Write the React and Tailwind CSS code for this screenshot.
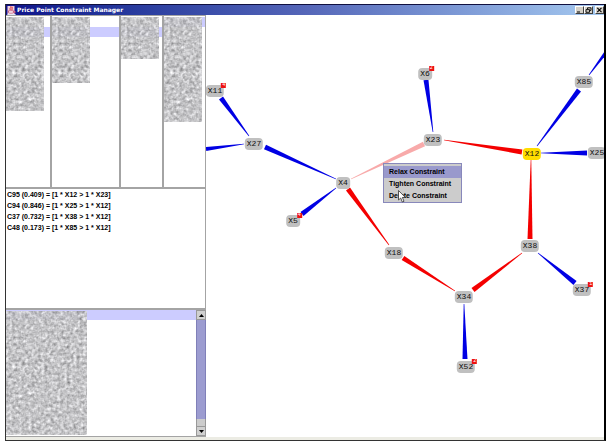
import { useState } from 'react';

const LISTS = [
  { id: 'products', selected: 1, noise: 'w-[38px] h-[94px]', col: 'border-r-2' },
  { id: 'attributes', selected: 1, noise: 'w-[38px] h-[66px]', col: 'border-r-2' },
  { id: 'regions', selected: 1, noise: 'w-[38px] h-[42px]', col: 'border-r-2' },
  { id: 'prices', selected: 0, noise: 'w-[38px] h-[105px]', col: 'border-r' },
];

const CONSTRAINTS = [
  'C95 (0.409) = [1 * X12 > 1 * X23]',
  'C94 (0.846) = [1 * X25 > 1 * X12]',
  'C37 (0.732) = [1 * X38 > 1 * X12]',
  'C48 (0.173) = [1 * X85 > 1 * X12]',
];

const MENU_ITEMS = ['Relax Constraint', 'Tighten Constraint', 'Delete Constraint'];

const NODES = [
  { id: 'X11', x: 9, y: 76, badge: 4 },
  { id: 'X6', x: 219, y: 59, badge: 2 },
  { id: 'X27', x: 48, y: 129 },
  { id: 'X23', x: 227, y: 125 },
  { id: 'X85', x: 378, y: 67 },
  { id: 'X12', x: 326, y: 139, active: true },
  { id: 'X25', x: 391, y: 138 },
  { id: 'X4', x: 137, y: 168 },
  { id: 'X5', x: 87, y: 206, badge: 4 },
  { id: 'X18', x: 188, y: 238 },
  { id: 'X38', x: 324, y: 231 },
  { id: 'X37', x: 376, y: 275, badge: 1 },
  { id: 'X34', x: 258, y: 282 },
  { id: 'X52', x: 260, y: 352, badge: 2 },
];

const BLUE = '#0000e4';
const RED = '#f40000';
const PINK = '#f8aaaa';

// [tip x, tip y, wide end x, wide end y, width, colour]
const EDGES = [
  [43, 121, 15, 83, 5, BLUE],
  [38, 129, 0, 134, 4, BLUE],
  [130, 164, 59, 132, 5, BLUE],
  [130, 173, 96, 199, 5, BLUE],
  [145, 164, 218, 129, 5, PINK],
  [183, 230, 142, 174, 5, RED],
  [249, 276, 197, 243, 5, RED],
  [316, 238, 267, 275, 5, RED],
  [325, 145, 324, 224, 5, RED],
  [238, 125, 316, 137, 5, RED],
  [335, 138, 381, 138, 5, BLUE],
  [331, 131, 373, 75, 5, BLUE],
  [383, 60, 404, 32, 4, BLUE],
  [332, 238, 369, 268, 5, BLUE],
  [258, 289, 259, 344, 5, BLUE],
  [227, 117, 220, 65, 5, BLUE],
];

function wedge([tx, ty, wx, wy, w]) {
  const len = Math.hypot(wx - tx, wy - ty);
  const nx = -(wy - ty) / len;
  const ny = (wx - tx) / len;
  const p = (x, y, r) => `${x + nx * r},${y + ny * r}`;
  return [p(tx, ty, 0.3), p(wx, wy, w / 2), p(wx, wy, -w / 2), p(tx, ty, -0.3)].join(' ');
}

function Noise({ className }) {
  return (
    <svg className={`absolute left-0 opacity-95 ${className}`} aria-hidden="true">
      <filter id="grain" x="0" y="0" width="100%" height="100%" colorInterpolationFilters="sRGB">
        <feTurbulence type="fractalNoise" baseFrequency="0.31" numOctaves="2" seed="11" />
        <feColorMatrix values="0.4 0.4 0 0 0.36  0.4 0.4 0 0 0.36  0.4 0.4 0 0 0.37  0 0 0 0 1" />
      </filter>
      <rect width="100%" height="100%" filter="url(#grain)" />
    </svg>
  );
}

function JavaIcon() {
  return (
    <svg viewBox="0 0 9 9" className="w-[9px] h-[9px]" aria-hidden="true">
      <rect x="0.5" width="7" height="8" fill="#f0d4de" />
      <path d="M3.6 0.2C5.2 1.6 1.6 2.3 3.6 4M5.6 0.8C4.3 2 5.8 2.8 4.6 4.2" stroke="#d81828" strokeWidth="1" fill="none" />
      <path d="M1.5 4.8H6.4V6.5C6 7.4 2 7.4 1.5 6.5ZM6.4 5.2H8.2V6.6H6.4" stroke="#b83060" strokeWidth="0.7" fill="#fff" />
      <path d="M0.3 8.4H8.6" stroke="#fff" strokeWidth="1" />
    </svg>
  );
}

function WindowButton({ label, children }) {
  return (
    <button
      type="button"
      aria-label={label}
      className="w-[9px] h-[8px] bg-[#d4d0c8] border border-t-white border-l-white border-r-[#404040] border-b-[#404040] flex"
    >
      <svg viewBox="0 0 7 6" className="w-full h-full" fill="none" stroke="#000">
        {children}
      </svg>
    </button>
  );
}

function TitleBar() {
  return (
    <header className="h-[11px] shrink-0 flex items-center gap-px pl-px border-t border-[#101040] bg-linear-to-r from-[#10108a] via-[#5566b8] to-[#a6caf0]">
      <JavaIcon />
      <h1 className="flex-1 text-white font-bold text-[6px] leading-[10px] font-['DejaVu_Sans',sans-serif]">
        Price Point Constraint Manager
      </h1>
      <div className="flex">
        <WindowButton label="Minimize">
          <path d="M1 5H4" />
        </WindowButton>
        <WindowButton label="Restore">
          <path d="M2.5 2V0.8H6V3.4H5M1 2.6H4.5V5.3H1Z" strokeWidth="0.9" />
        </WindowButton>
        <div className="w-[2px]" />
        <WindowButton label="Close">
          <path d="M1.3 0.8L5.5 5.2M5.5 0.8L1.3 5.2" strokeWidth="1.1" />
        </WindowButton>
      </div>
    </header>
  );
}

function ListPanel({ list }) {
  return (
    <div className={`relative border-[#a4a4a4] pt-px ${list.col}`}>
      <div className={list.selected === 0 ? 'h-[10px] bg-[#ccccff]' : 'h-[10px]'} />
      <div className={list.selected === 1 ? 'h-[10px] bg-[#ccccff]' : 'h-[10px]'} />
      <Noise className={`top-px ${list.noise}`} />
    </div>
  );
}

function ScrollBar() {
  const arrow = 'h-[10px] bg-[#d0d0d0] border border-[#999999] flex items-center justify-center';
  return (
    <div className="w-[10px] flex flex-col">
      <button type="button" aria-label="Scroll up" className={arrow}>
        <svg viewBox="0 0 5 3" className="w-[5px] h-[3px]"><path d="M0 3L2.5 0L5 3Z" /></svg>
      </button>
      <div className="flex-1 bg-[#9c9cd0] border-x border-[#8080b8]" />
      <div className="h-[7px] bg-[#cccccc] border-x border-[#999999]" />
      <button type="button" aria-label="Scroll down" className={arrow}>
        <svg viewBox="0 0 5 3" className="w-[5px] h-[3px]"><path d="M0 0L2.5 3L5 0Z" /></svg>
      </button>
    </div>
  );
}

function Sidebar() {
  return (
    <aside className="w-[200px] shrink-0 grid grid-rows-[174fr_119fr_129fr]">
      <div className="grid grid-cols-[46fr_69fr_43fr_42fr] border-t border-b-2 border-[#a4a4a4]">
        {LISTS.map((list) => <ListPanel key={list.id} list={list} />)}
      </div>
      <ul className="border-r border-[#a4a4a4] pl-px text-[7px] leading-[11px] font-bold text-black">
        {CONSTRAINTS.map((c) => <li key={c}>{c}</li>)}
      </ul>
      <div className="relative flex border-t-2 border-b border-[#a4a4a4]">
        <div className="flex-1">
          <div className="h-[10px] bg-[#ccccff]" />
        </div>
        <Noise className="top-px w-[81px] h-[124px]" />
        <ScrollBar />
      </div>
    </aside>
  );
}

function Node({ node }) {
  return (
    <div
      className={`absolute -translate-x-1/2 -translate-y-1/2 rounded-[4px] px-[2px] text-[8px] leading-[12px] font-['Liberation_Mono',monospace] text-[#111111] ${
        node.active ? 'bg-[#ffdd00]' : 'bg-[#c0c0c0]'
      }`}
      style={{ left: node.x, top: node.y }}
    >
      {node.id}
      {node.badge && (
        <span className="absolute -top-[2px] -right-[2px] w-[5px] h-[5px] bg-[#ee1111] text-white text-[5px] leading-[5px] text-center">
          {node.badge}
        </span>
      )}
    </div>
  );
}

function ContextMenu() {
  const [hover, setHover] = useState(0);

  return (
    <div role="menu" className="absolute left-[177px] top-[148px] w-[79px] bg-[#cccccc] border border-[#8888bb] pt-[2px]">
      {MENU_ITEMS.map((item, i) => (
        <button
          key={item}
          type="button"
          role="menuitem"
          onMouseEnter={() => setHover(i)}
          className={`block w-full text-left pl-[5px] text-[7px] leading-[12px] font-bold text-black ${
            hover === i ? 'bg-[#9999cc]' : ''
          }`}
        >
          {item}
        </button>
      ))}
      <svg viewBox="0 0 8 13" className="absolute left-[14px] top-[26px] w-[8px] h-[13px]" aria-hidden="true">
        <path d="M0.5 0.5V10L2.7 8L4.3 12L6 11.3L4.4 7.5H7.4Z" fill="#fff" stroke="#333" strokeWidth="0.8" />
      </svg>
    </div>
  );
}

function Graph() {
  return (
    <main className="relative flex-1 overflow-hidden bg-white">
      <svg className="absolute inset-0 w-full h-full" aria-hidden="true">
        {EDGES.map((e, i) => <polygon key={i} points={wedge(e)} fill={e[5]} />)}
      </svg>
      {NODES.map((n) => <Node key={n.id} node={n} />)}
      <ContextMenu />
    </main>
  );
}

export default function App() {
  return (
    <div className="h-screen bg-white pt-1 pl-[5px] pr-1 pb-[5px] font-['Liberation_Sans',Arial,sans-serif]">
      <div className="h-full flex flex-col bg-white border-l border-l-[#333333] border-r-2 border-r-black border-b border-b-[#333333]">
        <TitleBar />
        <div className="flex-1 min-h-0 flex">
          <Sidebar />
          <Graph />
        </div>
        <div className="h-[3px] shrink-0 bg-[#ecece4]" />
      </div>
    </div>
  );
}
